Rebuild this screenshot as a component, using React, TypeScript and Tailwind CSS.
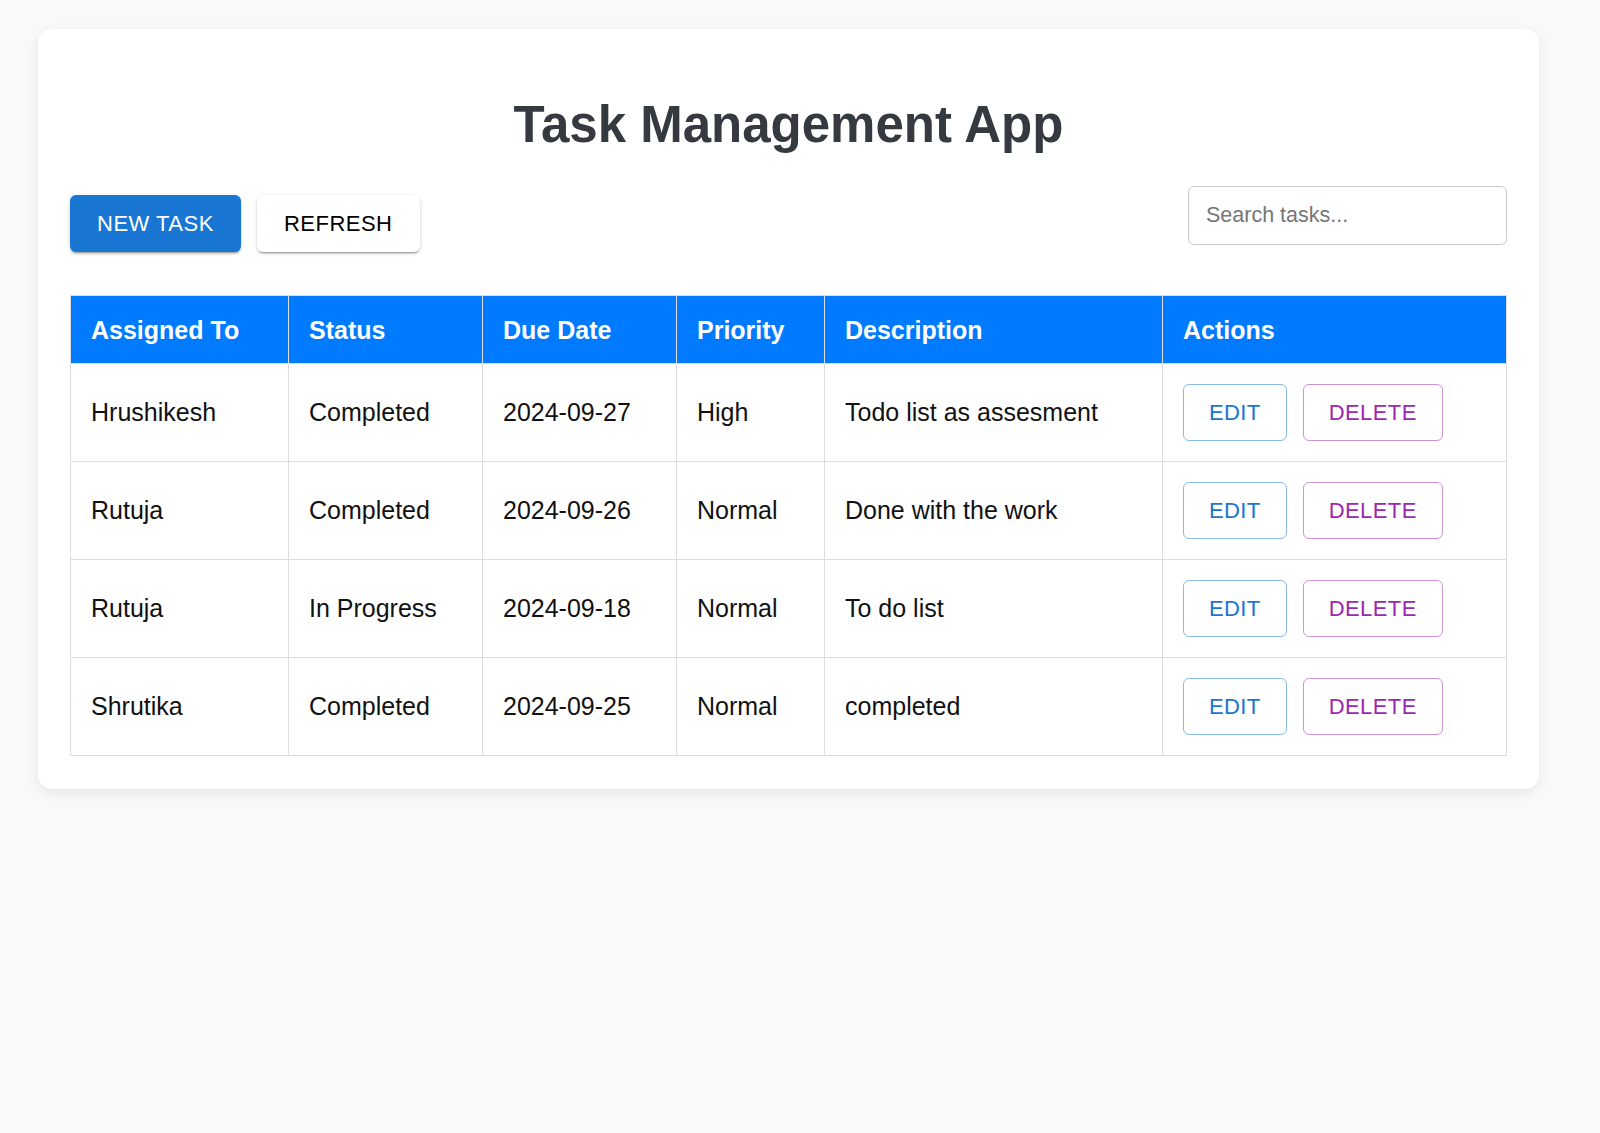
type Task = {
  assignedTo: string;
  status: string;
  dueDate: string;
  priority: string;
  description: string;
};

const tasks: Task[] = [
  { assignedTo: 'Hrushikesh', status: 'Completed', dueDate: '2024-09-27', priority: 'High', description: 'Todo list as assesment' },
  { assignedTo: 'Rutuja', status: 'Completed', dueDate: '2024-09-26', priority: 'Normal', description: 'Done with the work' },
  { assignedTo: 'Rutuja', status: 'In Progress', dueDate: '2024-09-18', priority: 'Normal', description: 'To do list' },
  { assignedTo: 'Shrutika', status: 'Completed', dueDate: '2024-09-25', priority: 'Normal', description: 'completed' },
];

const headers = ['Assigned To', 'Status', 'Due Date', 'Priority', 'Description', 'Actions'];
const widths = ['w-[218px]', 'w-[194px]', 'w-[194px]', 'w-[148px]', 'w-[338px]', 'w-[344px]'];

export default function App() {
  return (
    <div className="min-h-[1133px] bg-[#f8f9fa] pt-[29px] font-['Liberation_Sans',Arial,sans-serif]">
      <div className="ml-[38px] w-[1501px] rounded-[14px] bg-white px-8 pb-[33px] pt-8 shadow-[0_4px_14px_rgba(0,0,0,0.08)]">
        <h1 className="mt-[33px] text-center text-[51px] font-bold leading-[61px] text-[#343a40]">
          Task Management App
        </h1>

        <div className="mt-[31px] flex items-start justify-between">
          <div className="mt-[9px] flex gap-4">
            <button className="flex h-[57px] items-center rounded-[6px] bg-[#1976d2] px-[27px] text-[22px] uppercase tracking-[0.5px] text-white shadow-[0_3px_1px_-2px_rgba(0,0,0,0.2),0_2px_2px_0_rgba(0,0,0,0.14),0_1px_5px_0_rgba(0,0,0,0.12)]">
              New Task
            </button>
            <button className="flex h-[57px] items-center rounded-[6px] bg-white px-[27px] text-[22px] uppercase tracking-[0.5px] text-black shadow-[0_3px_1px_-2px_rgba(0,0,0,0.2),0_2px_2px_0_rgba(0,0,0,0.14),0_1px_5px_0_rgba(0,0,0,0.12)]">
              Refresh
            </button>
          </div>
          <input
            type="text"
            placeholder="Search tasks..."
            className="h-[59px] w-[319px] rounded-[6px] border border-[#cccccc] px-[17px] text-[21.5px] text-black outline-none placeholder:text-[#767676]"
          />
        </div>

        <table className="mt-[43px] w-[1437px] table-fixed border-collapse border border-[#dddddd] text-[25px]">
          <colgroup>
            {widths.map((w, i) => (
              <col key={i} className={w} />
            ))}
          </colgroup>
          <thead>
            <tr className="bg-[#007bff]">
              {headers.map((h) => (
                <th
                  key={h}
                  className="h-[68px] border border-[#dddddd] px-5 text-left align-middle font-bold leading-[28px] text-white"
                >
                  {h}
                </th>
              ))}
            </tr>
          </thead>
          <tbody>
            {tasks.map((t, i) => (
              <tr key={i}>
                <td className="border border-[#dddddd] px-5 align-middle text-[#111111]">{t.assignedTo}</td>
                <td className="border border-[#dddddd] px-5 align-middle text-[#111111]">{t.status}</td>
                <td className="border border-[#dddddd] px-5 align-middle text-[#111111]">{t.dueDate}</td>
                <td className="border border-[#dddddd] px-5 align-middle text-[#111111]">{t.priority}</td>
                <td className="border border-[#dddddd] px-5 align-middle text-[#111111]">{t.description}</td>
                <td className="border border-[#dddddd] px-5 py-5 align-middle">
                  <div className="flex gap-4">
                    <button className="flex h-[57px] items-center rounded-[6px] border border-[#1976d2]/50 px-[25px] text-[22px] tracking-[0.4px] text-[#1976d2]">
                      EDIT
                    </button>
                    <button className="flex h-[57px] items-center rounded-[6px] border border-[#9c27b0]/50 px-[25px] text-[22px] tracking-[0.4px] text-[#9c27b0]">
                      DELETE
                    </button>
                  </div>
                </td>
              </tr>
            ))}
          </tbody>
        </table>
      </div>
    </div>
  );
}
